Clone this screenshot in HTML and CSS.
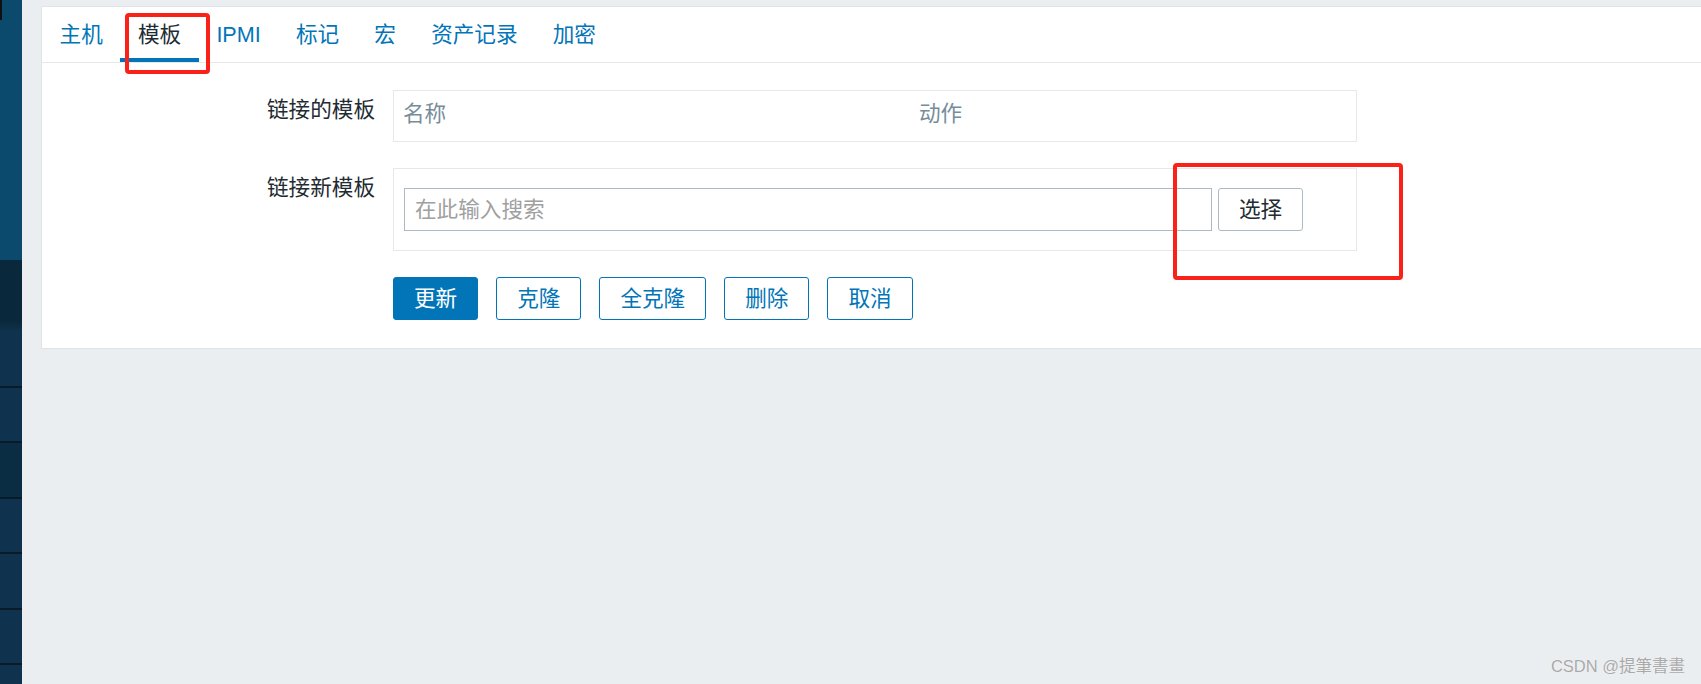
FILE: index.html
```html
<!DOCTYPE html>
<html lang="zh-CN">
<head>
    <meta charset="UTF-8">
    <meta name="viewport" content="width=device-width, initial-scale=1.0">
    <title>主机 - 模板</title>
    <link rel="stylesheet" href="styles.css">
</head>
<body>
    <div class="layout">
        <aside class="sidebar">
            <div class="sidebar-corner"></div>
            <div class="sidebar-top"></div>
            <div class="sidebar-current"></div>
            <div class="nav-item"></div>
            <div class="nav-item"></div>
            <div class="nav-item dark"></div>
            <div class="nav-item"></div>
            <div class="nav-item"></div>
            <div class="nav-item"></div>
            <div class="nav-item"></div>
        </aside>

        <main class="content">
            <div class="card">
                <ul class="tabs">
                    <li class="tab"><a href="#">主机</a></li>
                    <li class="tab active">模板</li>
                    <li class="tab"><a href="#">IPMI</a></li>
                    <li class="tab"><a href="#">标记</a></li>
                    <li class="tab"><a href="#">宏</a></li>
                    <li class="tab"><a href="#">资产记录</a></li>
                    <li class="tab"><a href="#">加密</a></li>
                </ul>

                <form class="form">
                    <div class="form-row">
                        <div class="form-label">链接的模板</div>
                        <div class="field-box">
                            <table class="linked-table">
                                <thead>
                                    <tr>
                                        <th class="col-name">名称</th>
                                        <th>动作</th>
                                    </tr>
                                </thead>
                            </table>
                        </div>
                    </div>

                    <div class="form-row">
                        <label class="form-label" for="new-template">链接新模板</label>
                        <div class="field-box multiselect">
                            <input type="text" id="new-template" placeholder="在此输入搜索">
                            <button type="button" class="btn-grey">选择</button>
                        </div>
                    </div>

                    <div class="form-row">
                        <div></div>
                        <div class="form-actions">
                            <button type="button" class="btn-main">更新</button>
                            <button type="button" class="btn-alt">克隆</button>
                            <button type="button" class="btn-alt">全克隆</button>
                            <button type="button" class="btn-alt">删除</button>
                            <button type="button" class="btn-alt">取消</button>
                        </div>
                    </div>
                </form>
            </div>
        </main>
    </div>

    <!-- red marks drawn over the screenshot -->
    <div class="mark mark-tab"></div>
    <div class="mark mark-select"></div>

    <div class="watermark">CSDN @提筆書畫</div>
</body>
</html>
```

FILE: styles.css
```css
body {
    margin: 0;
    background-color: #ebeef0;
    font-family: "Liberation Sans", Arial, "Noto Sans CJK SC", sans-serif;
    font-size: 21.6px;
    color: #1f2c33;
    overflow: hidden;
}
.layout {
    display: flex;
    height: 684px;
}

/* sidebar */
.sidebar {
    width: 22px;
    flex: none;
    display: flex;
    flex-direction: column;
    background-color: #0f334e;
    position: relative;
    overflow: hidden;
}
.sidebar > div {
    flex: none;
}
.sidebar-corner {
    position: absolute;
    left: 0;
    top: 0;
    width: 2px;
    height: 20px;
    background-color: #111;
}
.sidebar-top {
    height: 260px;
    background-color: #0b4a6d;
}
.sidebar-current {
    height: 72px;
    background: linear-gradient(#0a283b 85%, #0f334e);
}
.nav-item {
    height: 53.5px;
    border-bottom: 2px solid #081b29;
}
.nav-item.dark {
    background-color: #0b2d44;
}

/* main area */
.content {
    flex: 1;
    padding: 6px 0 0 19px;
    min-width: 0;
}
.card {
    background-color: #fff;
    border: 1px solid #dfe4e7;
    border-right: none;
    margin-right: -2px;
}

.tabs {
    list-style: none;
    margin: 0;
    padding: 0;
    display: flex;
    height: 55px;
    border-bottom: 1px solid #e6e9eb;
}
.tab {
    display: flex;
    align-items: center;
    padding: 0 17.6px;
    line-height: 24px;
}
.tab a {
    color: #0275b8;
    text-decoration: none;
}
.tab.active {
    color: #1f2c33;
    box-shadow: inset 0 -4px 0 #0275b8;
}

/* form */
.form {
    padding: 27px 0 28px;
}
.form-row {
    display: grid;
    grid-template-columns: 333px 964px;
    column-gap: 18px;
    margin-bottom: 26px;
}
.form-row:last-child {
    margin-bottom: 0;
}
.form-label {
    text-align: right;
    padding-top: 8px;
    line-height: 24px;
}
.field-box {
    border: 1px solid #e6e9eb;
}

.linked-table {
    width: 100%;
    border-collapse: collapse;
}
.linked-table th {
    text-align: left;
    font-weight: normal;
    color: #768d99;
    padding: 9px 9px 13px;
    line-height: 28px;
}
.linked-table .col-name {
    width: 498px;
}

.multiselect {
    display: flex;
    padding: 19px 10px;
}
.multiselect input {
    width: 808px;
    height: 43px;
    box-sizing: border-box;
    border: 1px solid #acbbc2;
    padding: 0 10px;
    font: inherit;
    color: #1f2c33;
    outline: none;
}
.multiselect input::placeholder {
    color: #a0a0a0;
}

button {
    font: inherit;
    height: 43px;
    padding: 0 20px;
    border-radius: 3px;
    cursor: pointer;
    line-height: 24px;
}
.btn-grey {
    margin-left: 6px;
    background-color: #fff;
    border: 1px solid #acbbc2;
    color: #1f2c33;
}
.form-actions {
    display: flex;
    gap: 18px;
}
.btn-main {
    background-color: #0275b8;
    border: 1px solid #0275b8;
    color: #fff;
}
.btn-alt {
    background-color: #fff;
    border: 1px solid #0275b8;
    color: #0275b8;
}

/* annotation marks */
.mark {
    position: absolute;
    border: 4.5px solid #fa2218;
    border-radius: 4px;
    box-sizing: border-box;
}
.mark-tab {
    left: 125px;
    top: 13px;
    width: 85px;
    height: 61px;
}
.mark-select {
    left: 1173px;
    top: 163px;
    width: 230px;
    height: 117px;
}

.watermark {
    position: absolute;
    right: 16px;
    top: 656px;
    font-size: 16.5px;
    line-height: 20px;
    color: #a9a9a9;
    text-shadow: 0 0 1px #fff;
}
```
